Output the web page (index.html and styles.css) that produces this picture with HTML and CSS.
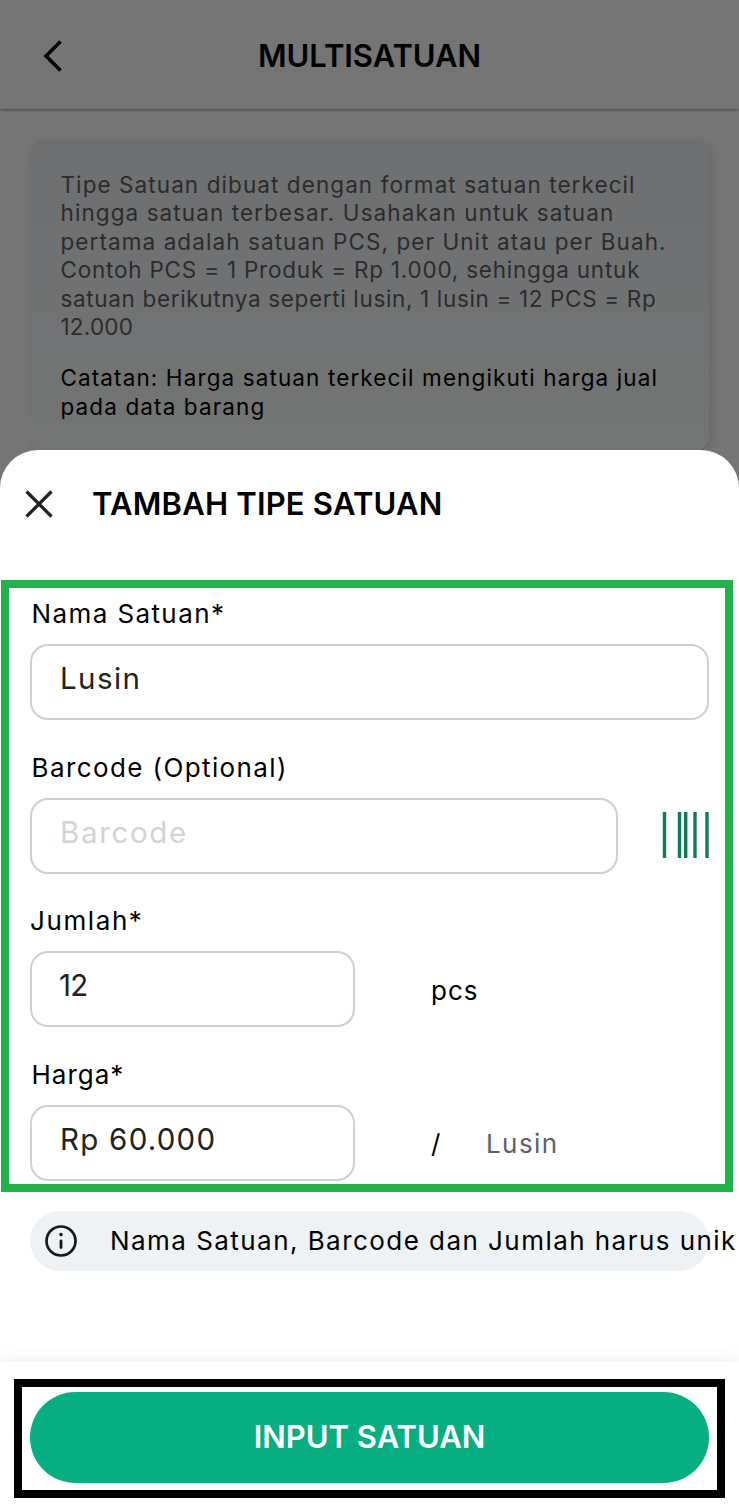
FILE: index.html
```html
<!DOCTYPE html>
<html lang="id">
<head>
  <meta charset="UTF-8">
  <meta name="viewport" content="width=device-width, initial-scale=1.0">
  <title>Multisatuan</title>
  <link rel="stylesheet" href="styles.css">
</head>
<body>
  <header class="topbar">
    <svg class="back-icon" viewBox="0 0 20 34" aria-hidden="true">
      <path d="M17.5 2.5 L3 17 L17.5 31.5"></path>
    </svg>
    <h1>MULTISATUAN</h1>
  </header>

  <main class="page">
    <div class="info-card">
      <p>Tipe Satuan dibuat dengan format satuan terkecil<br>
        hingga satuan terbesar. Usahakan untuk satuan<br>
        pertama adalah satuan PCS, per Unit atau per Buah.<br>
        <span class="tight">Contoh PCS = 1 Produk = Rp 1.000, sehingga untuk</span><br>
        <span class="tighter">satuan berikutnya seperti lusin, 1 lusin = 12 PCS = Rp</span><br>
        <span class="numeric">12.000</span></p>
      <p class="note">Catatan: Harga satuan terkecil mengikuti harga jual<br>pada data barang</p>
    </div>
  </main>

  <!-- Bottom sheet -->
  <div class="overlay">
    <section class="sheet">
      <div class="sheet-header">
        <svg class="close-icon" viewBox="0 0 28 28" aria-hidden="true">
          <path d="M1.5 1.5 L26.5 26.5 M26.5 1.5 L1.5 26.5"></path>
        </svg>
        <h2>TAMBAH TIPE SATUAN</h2>
      </div>

      <form class="form-box">
        <div class="field">
          <label for="nama">Nama Satuan*</label>
          <input type="text" id="nama" value="Lusin">
        </div>

        <div class="field">
          <label for="barcode">Barcode (Optional)</label>
          <div class="row">
            <input type="text" id="barcode" class="barcode-input" placeholder="Barcode">
            <svg class="barcode-icon" viewBox="0 0 48 46" aria-hidden="true">
              <path d="M2.5 0V46 M17.5 0V46 M23.7 0V46 M33 0V46 M45 0V46"></path>
            </svg>
          </div>
        </div>

        <div class="field">
          <label for="jumlah" class="label-jumlah">Jumlah*</label>
          <div class="row">
            <input type="text" id="jumlah" class="short-input digits" value="12">
            <span class="unit">pcs</span>
          </div>
        </div>

        <div class="field">
          <label for="harga" class="label-harga">Harga*</label>
          <div class="row">
            <input type="text" id="harga" class="short-input price" value="Rp 60.000">
            <span class="unit">/</span>
            <span class="unit-name">Lusin</span>
          </div>
        </div>
      </form>

      <div class="hint">
        <svg class="info-icon" viewBox="0 0 32 32" aria-hidden="true">
          <circle class="ring" cx="16" cy="16" r="14.5"></circle>
          <circle cx="16" cy="9.6" r="1.8"></circle>
          <path d="M16 16V22.5"></path>
        </svg>
        <span>Nama Satuan, Barcode dan Jumlah harus unik</span>
      </div>

      <footer class="sheet-footer">
        <div class="button-frame">
          <button type="button">INPUT SATUAN</button>
        </div>
      </footer>
    </section>
  </div>
</body>
</html>
```
FILE: styles.css
```css
* {
  box-sizing: border-box;
}

body {
  position: relative;
  height: 1508px;
  margin: 0;
  overflow: hidden;
  background-color: #fff;
  color: #000;
  font-family: Inter, "Liberation Sans", sans-serif;
}

h1, h2, p {
  margin: 0;
}

h1, h2 {
  font-size: 31px;
  font-weight: 600;
  line-height: 40px;
}

h1 {
  letter-spacing: -0.05px;
}

h2 {
  letter-spacing: 0.2px;
}

.topbar {
  display: grid;
  grid-template-columns: 62px 1fr 62px;
  align-items: center;
  height: 109px;
  box-shadow: 0 1px 3px rgba(0, 0, 0, 0.4);
}

.topbar h1 {
  padding-top: 2px;
  text-align: center;
}

.back-icon {
  width: 20px;
  height: 34px;
  margin: 3px 0 0 43px;
  fill: none;
  stroke: #000;
  stroke-width: 3.6;
}

.page {
  padding: 31px 30px 0;
}

.info-card {
  height: 310px;
  padding: 31px 30.5px 0;
  border-radius: 14px;
  background: linear-gradient(#eef2f6, #fbfdfd);
  box-shadow: 3px 3px 10px rgba(0, 0, 0, 0.12);
  color: #616161;
  font-size: 22.5px;
  line-height: 28.4px;
  letter-spacing: 1.08px;
  white-space: nowrap;
}

.info-card .tight {
  letter-spacing: 0.78px;
}

.info-card .tighter {
  letter-spacing: 0.65px;
}

.info-card .numeric {
  letter-spacing: 0.2px;
}

.info-card .note {
  margin-top: 23px;
  color: #000;
  letter-spacing: 1.11px;
}

.overlay {
  position: absolute;
  inset: 0;
  display: flex;
  flex-direction: column;
  justify-content: flex-end;
  background-color: rgba(0, 0, 0, 0.54);
}

.sheet {
  display: flex;
  flex-direction: column;
  height: 1058px;
  border-radius: 38px 38px 0 0;
  background-color: #fff;
}

.sheet-header {
  display: flex;
  align-items: center;
  gap: 39px;
  height: 130px;
  padding: 0 25px 22px;
}

.close-icon {
  width: 28px;
  height: 28px;
  stroke: #212121;
  stroke-width: 3.2;
}

.form-box {
  display: flex;
  flex-direction: column;
  gap: 31.5px;
  width: 732px;
  height: 612px;
  margin-left: 1px;
  padding: 10px 16px 0 21px;
  border: 8px solid #22b14c;
}

.field {
  display: flex;
  flex-direction: column;
  gap: 14px;
}

label,
.unit,
.unit-name {
  font-size: 26px;
  line-height: 32px;
  letter-spacing: 1.4px;
}

label {
  padding-left: 1.5px;
}

.label-jumlah {
  padding-left: 0;
  letter-spacing: 1.6px;
}

.label-harga {
  letter-spacing: 1px;
}

input {
  width: 100%;
  height: 76px;
  padding: 0 28px 8px;
  border: 2px solid #d0d0d0;
  border-radius: 18px;
  background-color: #fff;
  color: #212121;
  font-family: inherit;
  font-size: 29.5px;
  letter-spacing: 1.4px;
}

input::placeholder {
  color: #d2d4d4;
  letter-spacing: 1.65px;
}

.row {
  display: flex;
  align-items: center;
}

.barcode-input {
  flex: none;
  width: 588px;
}

.barcode-icon {
  flex: none;
  width: 48px;
  height: 46px;
  margin: 0 0 2px 44px;
  stroke: #14785c;
  stroke-width: 3.4;
}

.short-input {
  width: 325px;
}

.digits {
  padding-left: 27px;
  letter-spacing: -0.7px;
}

.price {
  letter-spacing: 1.25px;
}

.unit {
  width: 55px;
  margin: 3px 0 0 76px;
  letter-spacing: 1px;
}

.unit-name {
  margin-top: 3px;
  color: #616161;
}

.hint {
  display: flex;
  align-items: center;
  gap: 33px;
  width: 679px;
  height: 60px;
  margin: 19px 0 0 30px;
  padding: 0 0 1px 15px;
  border-radius: 30px;
  background-color: #eef2f5;
  font-size: 26px;
  line-height: 32px;
  letter-spacing: 1.45px;
  white-space: nowrap;
}

.info-icon {
  flex: none;
  width: 32px;
  height: 32px;
  fill: #15191e;
  stroke: #15191e;
  stroke-width: 2.8;
  stroke-linecap: round;
}

.info-icon circle {
  stroke-width: 0;
}

.info-icon .ring {
  fill: none;
  stroke-width: 2.7;
}

.sheet-footer {
  height: 146px;
  margin-top: auto;
  padding: 17px 14px 0;
  background-color: #fff;
  box-shadow: 0 -3px 14px rgba(190, 208, 225, 0.32);
}

.button-frame {
  height: 119px;
  padding: 5px 8px 0;
  border: 8px solid #000;
}

button {
  width: 100%;
  height: 91px;
  padding: 0 0 2px;
  border: none;
  border-radius: 46px;
  background-color: #07ae82;
  color: #fff;
  font-family: inherit;
  font-size: 31px;
  font-weight: 600;
}
```
